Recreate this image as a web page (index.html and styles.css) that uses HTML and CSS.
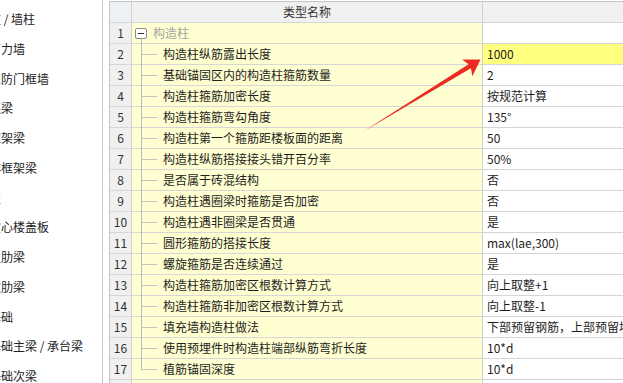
FILE: index.html
```html
<!DOCTYPE html>
<html lang="zh-CN">
<head>
<meta charset="utf-8">
<title>构造柱</title>
<link rel="stylesheet" href="styles.css">
</head>
<body>
<div class="app">
  <aside class="side">
    <ul class="nav">
      <li>柱 / 墙柱</li>
      <li>剪力墙</li>
      <li>人防门框墙</li>
      <li>连梁</li>
      <li>框架梁</li>
      <li>非框架梁</li>
      <li class="active">板</li>
      <li>空心楼盖板</li>
      <li>主肋梁</li>
      <li>次肋梁</li>
      <li>基础</li>
      <li>基础主梁 / 承台梁</li>
      <li>基础次梁</li>
    </ul>
  </aside>
  <main class="sheet">
    <div class="grid">
      <div class="row head"><div class="num"></div><div class="name">类型名称</div><div class="val"></div></div>
      <div class="row group"><div class="num">1</div><div class="name"><span class="box"></span>构造柱</div><div class="val"></div></div>
      <div class="row item"><div class="num">2</div><div class="name">构造柱纵筋露出长度</div><div class="val sel">1000</div></div>
      <div class="row item"><div class="num">3</div><div class="name">基础锚固区内的构造柱箍筋数量</div><div class="val">2</div></div>
      <div class="row item"><div class="num">4</div><div class="name">构造柱箍筋加密长度</div><div class="val">按规范计算</div></div>
      <div class="row item"><div class="num">5</div><div class="name">构造柱箍筋弯勾角度</div><div class="val">135°</div></div>
      <div class="row item"><div class="num">6</div><div class="name">构造柱第一个箍筋距楼板面的距离</div><div class="val">50</div></div>
      <div class="row item"><div class="num">7</div><div class="name">构造柱纵筋搭接接头错开百分率</div><div class="val">50%</div></div>
      <div class="row item"><div class="num">8</div><div class="name">是否属于砖混结构</div><div class="val">否</div></div>
      <div class="row item"><div class="num">9</div><div class="name">构造柱遇圈梁时箍筋是否加密</div><div class="val">否</div></div>
      <div class="row item"><div class="num">10</div><div class="name">构造柱遇非圈梁是否贯通</div><div class="val">是</div></div>
      <div class="row item"><div class="num">11</div><div class="name">圆形箍筋的搭接长度</div><div class="val">max(lae,300)</div></div>
      <div class="row item"><div class="num">12</div><div class="name">螺旋箍筋是否连续通过</div><div class="val">是</div></div>
      <div class="row item"><div class="num">13</div><div class="name">构造柱箍筋加密区根数计算方式</div><div class="val">向上取整+1</div></div>
      <div class="row item"><div class="num">14</div><div class="name">构造柱箍筋非加密区根数计算方式</div><div class="val">向上取整-1</div></div>
      <div class="row item"><div class="num">15</div><div class="name">填充墙构造柱做法</div><div class="val">下部预留钢筋，上部预留埋件</div></div>
      <div class="row item"><div class="num">16</div><div class="name">使用预埋件时构造柱端部纵筋弯折长度</div><div class="val">10*d</div></div>
      <div class="row item last"><div class="num">17</div><div class="name">植筋锚固深度</div><div class="val">10*d</div></div>
      <div class="row group"><div class="num">18</div><div class="name"><span class="box"></span>砌体加筋</div><div class="val"></div></div>
    </div>
  </main>
</div>
<svg class="arrow" width="623" height="383" viewBox="0 0 623 383">
  <polygon points="362.5,132 468.6,64.2 462,59.6 480.5,59.5 472.4,76.2 470.9,68.2" fill="#ec2b22"/>
</svg>
</body>
</html>
```
FILE: styles.css
```css
* { box-sizing: border-box; }
html, body {
  margin: 0;
  height: 100%;
  overflow: hidden;
  background: #fff;
}
body {
  position: relative;
  font-family: "Noto Sans CJK SC", "Noto Sans", sans-serif;
  font-size: 12px;
  color: #1e1e1e;
}
.app {
  display: flex;
  height: 383px;
}
.side {
  flex: none;
  width: 103px;
  border-right: 1px solid #c8c8c8;
  overflow: hidden;
}
.nav {
  list-style: none;
  margin: 0 0 0 -11px;
  padding: 4px 0 0;
  white-space: nowrap;
}
.nav li {
  height: 29.75px;
  line-height: 29.75px;
  color: #222;
}
.nav li.active { color: #1a6fd6; }

.sheet {
  flex: 1;
  min-width: 0;
  margin-left: 6px;
  padding-top: 1px;
  overflow: hidden;
}
.grid {
  width: 640px;
  border-left: 1px solid #c4c4c4;
  border-top: 1px solid #c4c4c4;
}
.row {
  display: flex;
  height: 21px;
  border-bottom: 1px solid #d6d6d6;
}
.num {
  flex: none;
  width: 22px;
  border-right: 1px solid #d0d0d0;
  background: #f0f0f0;
  text-align: center;
  line-height: 20px;
  color: #333;
}
.name {
  flex: none;
  position: relative;
  width: 351px;
  padding-left: 31px;
  border-right: 1px solid #d0d0d0;
  background: #ffffd2;
  line-height: 20px;
  white-space: nowrap;
}
.val {
  flex: none;
  width: 266px;
  padding-left: 4px;
  line-height: 20px;
  background: #fff;
  white-space: nowrap;
}
.val.sel { background: #ffff80; }

.head .num { background: #edf0f5; }
.head .name {
  background: #f0f0f0;
  padding-left: 0;
  text-align: center;
  color: #333;
}
.head .val { background: #f0f0f0; }

.group .name {
  padding-left: 21px;
  color: #a4a4a4;
}
.box {
  position: absolute;
  left: 3px;
  top: 5px;
  width: 12px;
  height: 11px;
  border: 1px solid #8c8c8c;
  border-radius: 2px;
  background: #fff;
}
.box::after {
  content: "";
  position: absolute;
  left: 2px;
  right: 2px;
  top: 4px;
  height: 1px;
  background: #333;
}
.group .name::before {
  content: "";
  position: absolute;
  left: 9px;
  top: 16px;
  bottom: -1px;
  width: 1px;
  background: #b8b8b8;
}
.group:last-child .name::before { display: none; }

.item .name::before {
  content: "";
  position: absolute;
  left: 9px;
  top: 0;
  bottom: -1px;
  width: 1px;
  background: #b8b8b8;
}
.item .name::after {
  content: "";
  position: absolute;
  left: 9px;
  top: 10px;
  width: 16px;
  height: 1px;
  background: #c4c4c4;
}
.item.last .name::before {
  bottom: auto;
  height: 10px;
}

.arrow {
  position: absolute;
  left: 0;
  top: 0;
  pointer-events: none;
}
```
